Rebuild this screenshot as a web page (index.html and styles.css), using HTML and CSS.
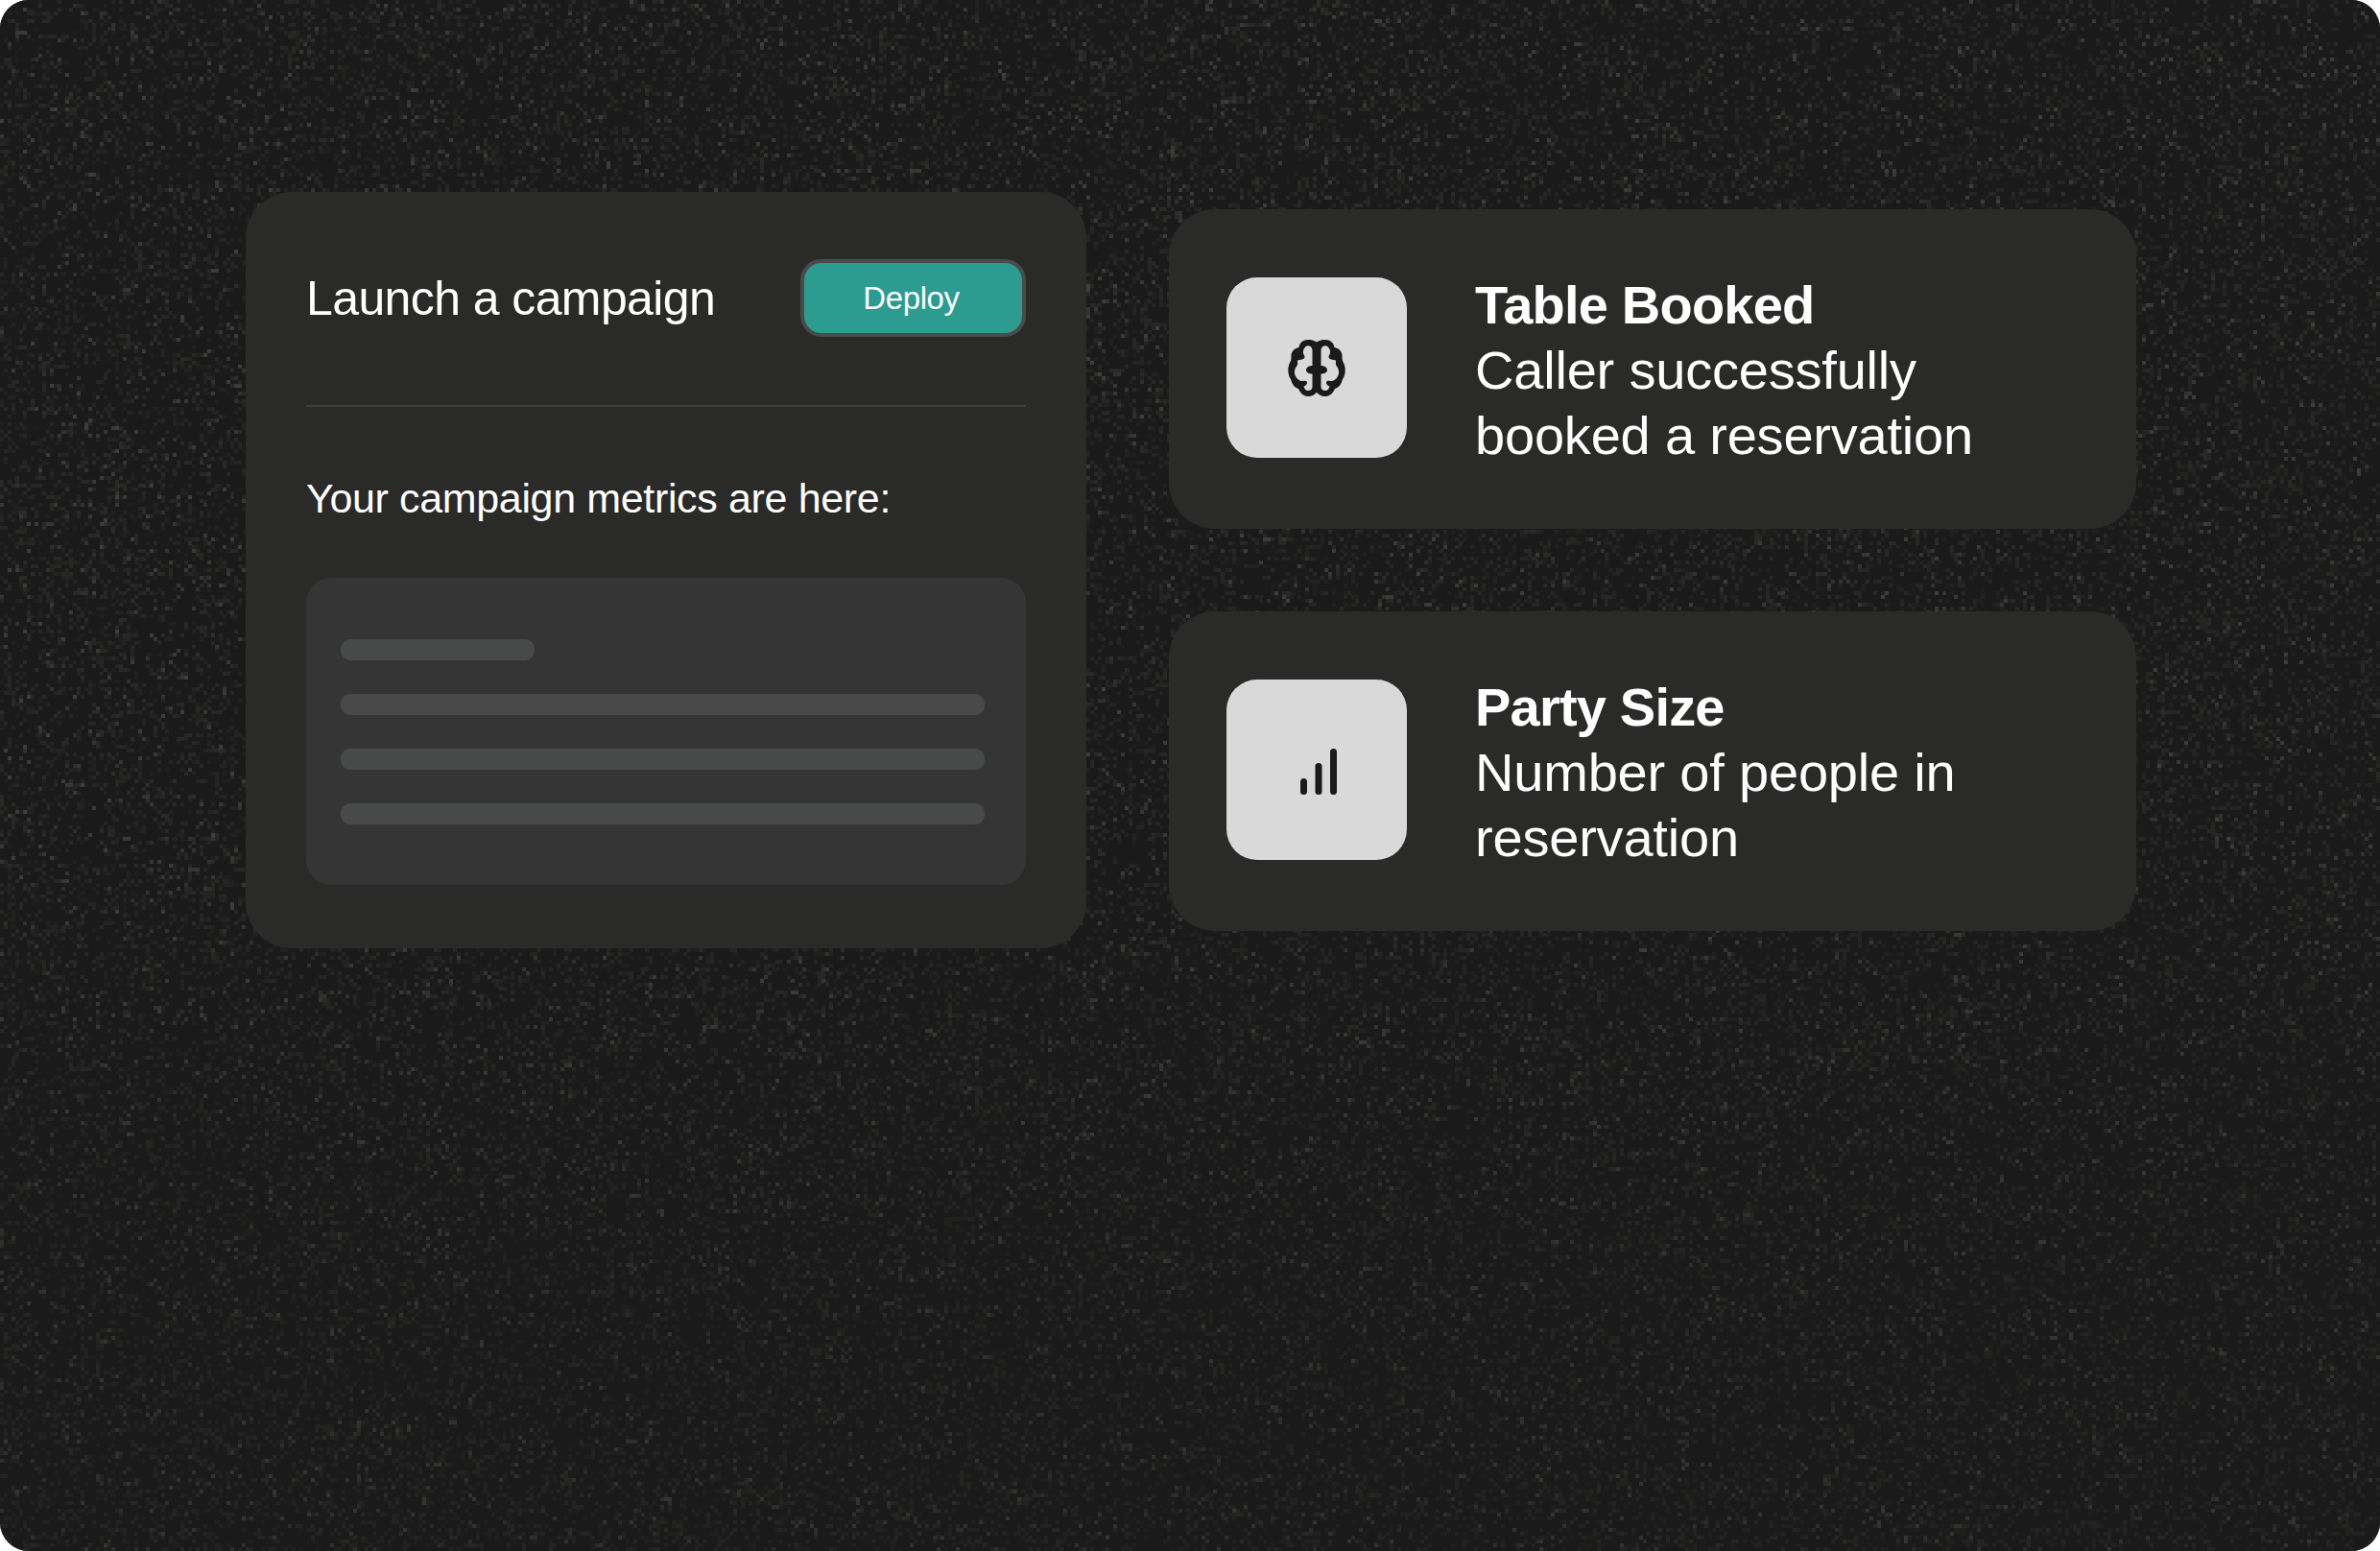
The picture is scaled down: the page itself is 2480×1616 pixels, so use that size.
FILE: index.html
```html
<!DOCTYPE html>
<html lang="en">
<head>
<meta charset="utf-8">
<title>Campaign</title>
<link rel="stylesheet" href="styles.css">
</head>
<body>
<main class="stage">
  <canvas class="grain" id="grain" width="620" height="404"></canvas>
  <div class="content">
    <section class="campaign">
      <header class="campaign-head">
        <h2 class="campaign-title">Launch a campaign</h2>
        <button class="deploy">Deploy</button>
      </header>
      <hr class="rule">
      <p class="metrics-label">Your campaign metrics are here:</p>
      <div class="skeleton">
        <div class="bar bar-short"></div>
        <div class="bar"></div>
        <div class="bar"></div>
        <div class="bar"></div>
      </div>
    </section>
    <div class="side">
      <article class="tile">
        <div class="tile-icon">
          <svg class="brain" viewBox="0 0 60 59" fill="#1a1a1a" fill-rule="evenodd">
            <path d="M31 3C27 .5 24 0 21 0 16 0 12 3 11.5 8 6 9 3 13 3.5 18 3.5 21 3 22 1.5 25-.5 30 0 37 3 41 4 46 7 50 11 51 13 56 17 59 21 59 25 59 28 57 31 54ZM19.5 6.5C22.5 5.5 25.5 7.5 25.5 11V27C22 27 19 29 19 31.5 19 34 22 35.5 25.5 35.5V49C25.5 52.5 21.5 54 19 52.5 17.5 51.5 17 50 16.5 48.5 18.5 48 20 46.5 20 44.5 20 43 18 42.5 16 43 12.5 43.5 9.5 41 8 38 6 34 7 30 9.5 27 10.5 25.5 10 24 10 21.5 13 21 17.5 20.5 17.5 18 17.5 16 15.5 15 16 12 16 10 17.5 7.5 19.5 6.5Z"/>
            <path transform="matrix(-1 0 0 1 60 0)" d="M31 3C27 .5 24 0 21 0 16 0 12 3 11.5 8 6 9 3 13 3.5 18 3.5 21 3 22 1.5 25-.5 30 0 37 3 41 4 46 7 50 11 51 13 56 17 59 21 59 25 59 28 57 31 54ZM19.5 6.5C22.5 5.5 25.5 7.5 25.5 11V27C22 27 19 29 19 31.5 19 34 22 35.5 25.5 35.5V49C25.5 52.5 21.5 54 19 52.5 17.5 51.5 17 50 16.5 48.5 18.5 48 20 46.5 20 44.5 20 43 18 42.5 16 43 12.5 43.5 9.5 41 8 38 6 34 7 30 9.5 27 10.5 25.5 10 24 10 21.5 13 21 17.5 20.5 17.5 18 17.5 16 15.5 15 16 12 16 10 17.5 7.5 19.5 6.5Z"/>
          </svg>
        </div>
        <div class="tile-text">
          <h3 class="tile-title">Table Booked</h3>
          <p class="tile-desc">Caller successfully<br>booked a reservation</p>
        </div>
      </article>
      <article class="tile">
        <div class="tile-icon">
          <svg class="signal" viewBox="0 0 38 48" fill="#1a1a1a">
            <rect x="0" y="31" width="7" height="17" rx="3.5"/>
            <rect x="15.5" y="15" width="7" height="33" rx="3.5"/>
            <rect x="31" y="0" width="7" height="48" rx="3.5"/>
          </svg>
        </div>
        <div class="tile-text">
          <h3 class="tile-title">Party Size</h3>
          <p class="tile-desc">Number of people in<br>reservation</p>
        </div>
      </article>
    </div>
  </div>
</main>
<script src="grain.js"></script>
</body>
</html>
```
FILE: styles.css
```css
* { box-sizing: border-box; }
html, body { margin: 0; padding: 0; background: #fff; }
body { width: 2480px; height: 1616px; overflow: hidden; font-family: "Liberation Sans", Arial, sans-serif; color: #fff; }
.stage { position: relative; width: 2480px; height: 1616px; background: #1a1a1a; border-radius: 30px; overflow: hidden; }
.grain { position: absolute; inset: 0; width: 2480px; height: 1616px; image-rendering: pixelated; }
.content { position: relative; display: flex; align-items: flex-start; gap: 86px; padding: 200px 0 0 256px; }
.campaign { width: 876px; height: 788px; padding: 70px 63px 0; background: #2a2a29; border-radius: 48px; }
.campaign-head { display: flex; align-items: center; justify-content: space-between; height: 81px; }
.campaign-title { margin: 0; font-size: 50px; font-weight: 400; letter-spacing: -0.6px; }
.deploy { width: 235px; height: 81px; border: 4px solid #4a4a4a; border-radius: 22px; background: #2b9c8f; color: #fff; font: 400 33px "Liberation Sans", Arial, sans-serif; letter-spacing: -0.4px; padding: 0 4px 0 0; }
.rule { height: 2px; margin: 71px 0 0; border: 0; background: #3e3e3d; }
.metrics-label { margin: 71px 0 0; font-size: 43px; line-height: 48px; letter-spacing: -0.35px; }
.skeleton { display: flex; flex-direction: column; gap: 35px; height: 320px; margin-top: 59px; padding: 64px 43px 0 36px; background: #353535; border-radius: 26px; }
.bar { height: 22px; background: #484a49; border-radius: 10px; }
.bar-short { width: 202px; }
.side { display: flex; flex-direction: column; gap: 86px; padding-top: 18px; }
.tile { display: flex; align-items: center; gap: 71px; width: 1008px; height: 333px; padding: 0 0 3px 60px; background: #2a2a29; border-radius: 48px; }
.tile-icon { display: flex; align-items: center; justify-content: center; width: 188px; height: 188px; background: #d9d9d9; border-radius: 32px; }
.brain { width: 60px; height: 59px; }
.signal { width: 38px; height: 48px; margin: 4px 0 0 4px; }
.tile-text { padding-top: 6px; }
.tile-title { margin: 0; font-size: 56px; line-height: 68px; font-weight: 700; letter-spacing: -0.8px; }
.tile-desc { margin: 0; font-size: 56px; line-height: 68px; font-weight: 400; letter-spacing: -0.2px; }
```
FILE: grain.js
```js
(function () {
  var canvas = document.getElementById('grain');
  var ctx = canvas.getContext('2d');
  var seed = 1234567;
  function rnd() {
    seed = (seed * 1664525 + 1013904223) >>> 0;
    return seed / 4294967296;
  }
  ctx.fillStyle = '#1a1a1a';
  ctx.fillRect(0, 0, canvas.width, canvas.height);
  for (var y = 0; y < canvas.height; y++) {
    var fade = y < 200 ? 1 : Math.max(0.72, 1 - (y - 200) / 500);
    for (var x = 0; x < canvas.width; x++) {
      var r = rnd();
      var level = 0;
      if (r < 0.04) level = 18 + rnd() * 18;
      else if (r < 0.28) level = 4 + rnd() * 11;
      if (level) {
        var v = Math.round(26 + level * fade);
        ctx.fillStyle = 'rgb(' + v + ',' + v + ',' + (v - 1) + ')';
        ctx.fillRect(x, y, 1, 1);
      }
    }
  }
})();
```
